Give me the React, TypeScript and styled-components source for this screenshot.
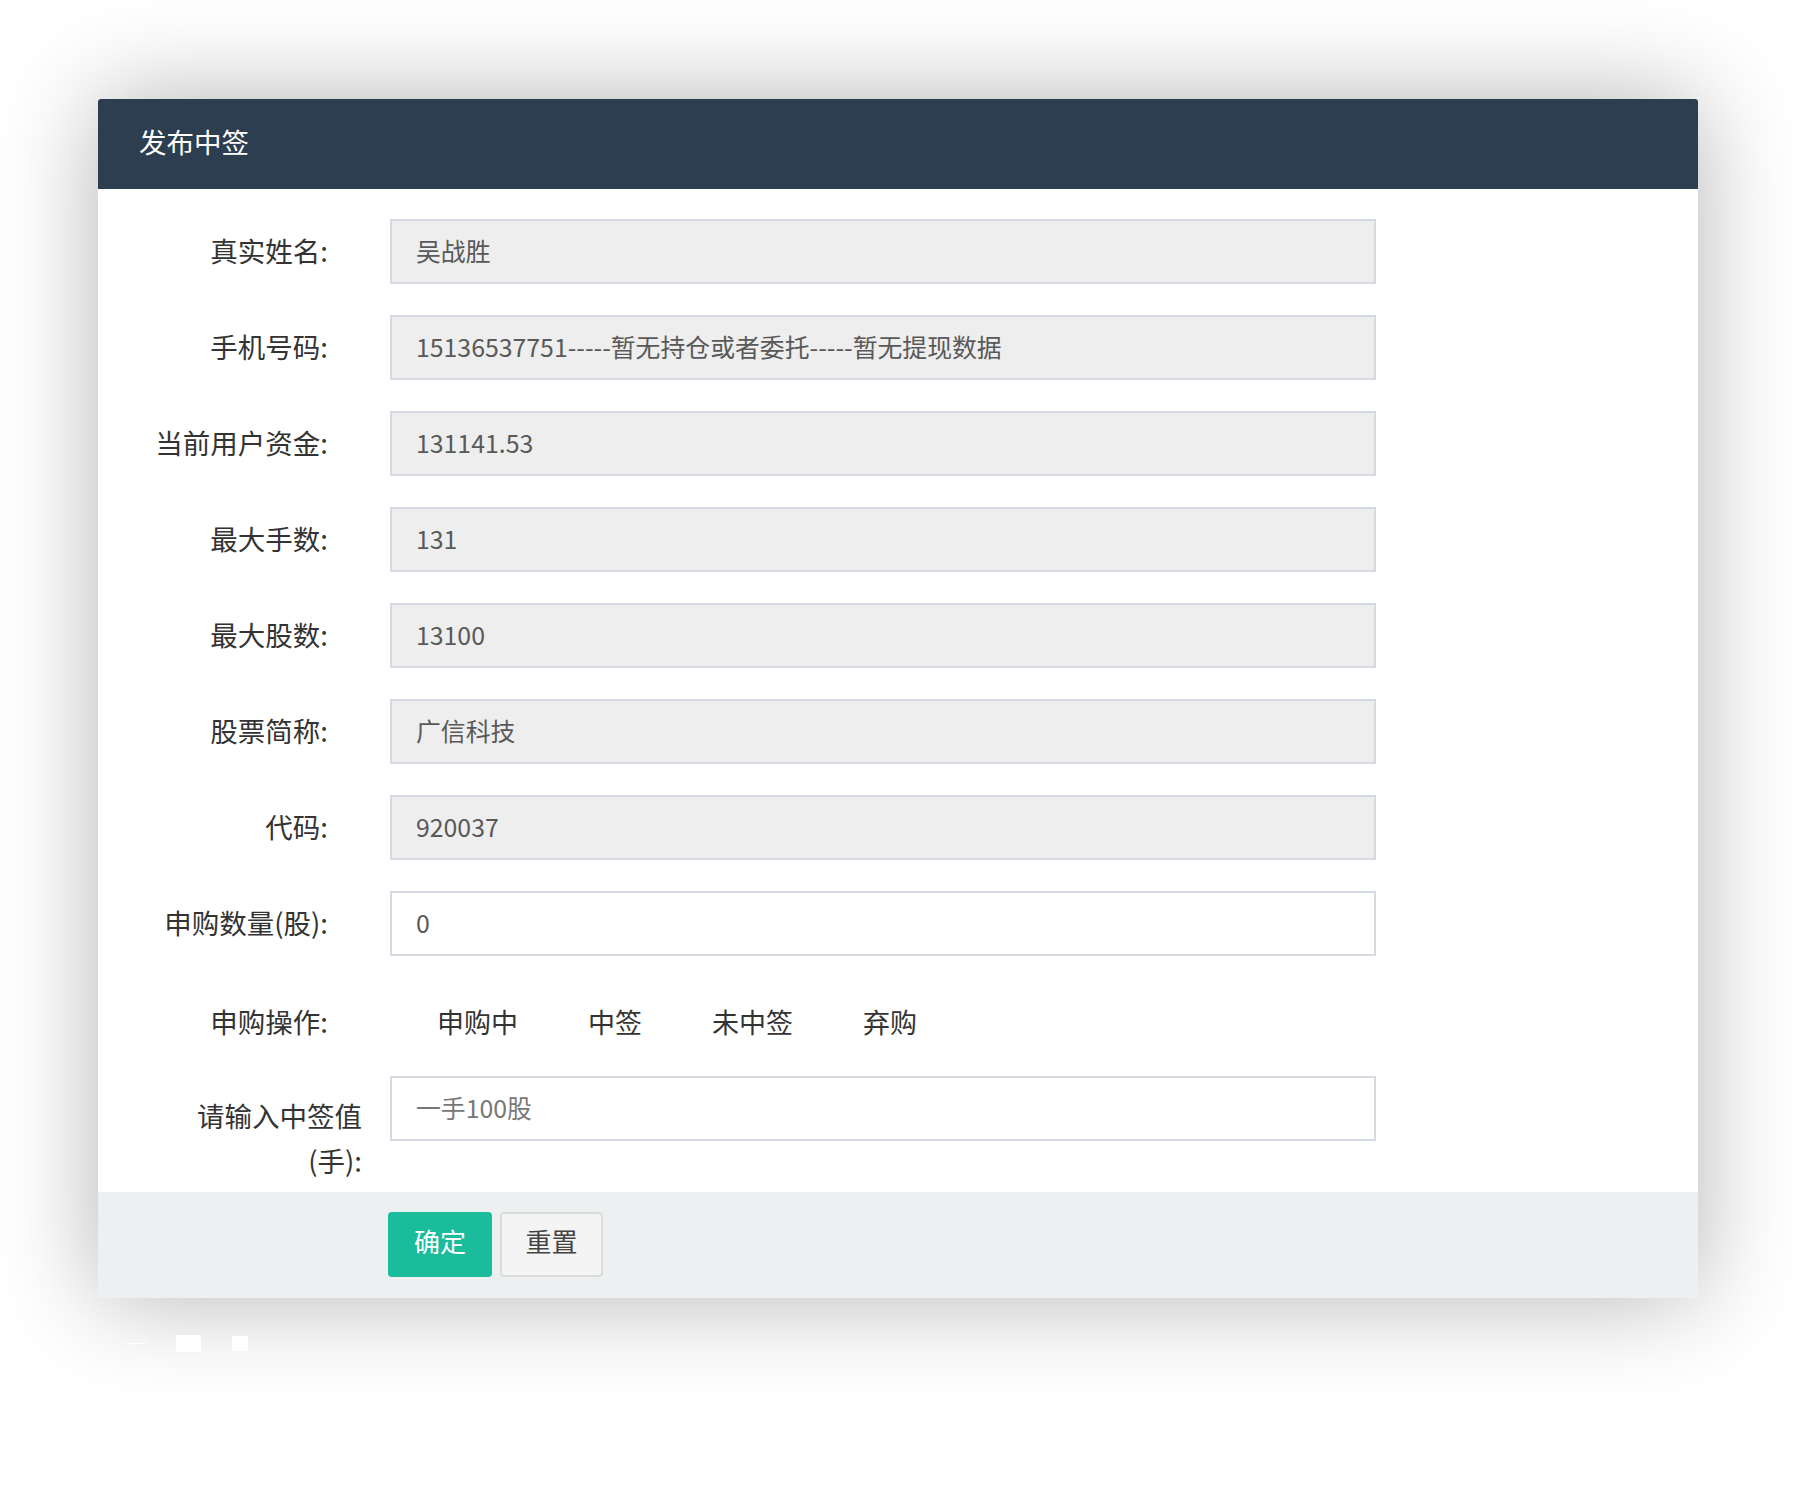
import React from 'react';
import styled, { createGlobalStyle } from 'styled-components';

const GlobalStyle = createGlobalStyle`
  html, body {
    margin: 0;
    padding: 0;
    background: #fff;
    font-family: "Noto Sans CJK SC", "Noto Sans", sans-serif;
  }
`;

const Page = styled.div`
  position: relative;
  width: 1800px;
  height: 1491px;
  box-sizing: border-box;
  padding: 99px 0 0 98px;
  overflow: hidden;
`;

const Dialog = styled.div`
  width: 1600px;
  background: #fff;
  border-radius: 3px 3px 0 0;
  box-shadow: 0 0 100px rgba(0, 0, 0, 0.3);
`;

const Header = styled.div`
  height: 90px;
  line-height: 84px;
  padding-left: 41px;
  background: #2c3e50;
  color: #fff;
  font-size: 27.5px;
  border-radius: 3px 3px 0 0;
`;

const Body = styled.form`
  padding: 30px 0 8.5px;
  margin: 0;
`;

const Row = styled.div<{ $top?: boolean }>`
  display: flex;
  align-items: ${(p) => (p.$top ? 'flex-start' : 'center')};
  margin-bottom: 31px;
  &:last-child {
    margin-bottom: 0;
  }
`;

const OptionRow = styled(Row)`
  height: 58px;
  box-sizing: border-box;
  padding-top: 12px;
`;

const Label = styled.label<{ $wrap?: boolean }>`
  flex: none;
  box-sizing: border-box;
  width: 292px;
  padding-right: ${(p) => (p.$wrap ? '28px' : '62px')};
  padding-left: ${(p) => (p.$wrap ? '96px' : '0')};
  padding-top: ${(p) => (p.$wrap ? '17px' : '0')};
  padding-bottom: ${(p) => (p.$wrap ? '0' : '3px')};
  text-align: right;
  font-size: 27.5px;
  line-height: ${(p) => (p.$wrap ? '45px' : '40px')};
  color: #333;
`;

const Field = styled.input`
  box-sizing: border-box;
  width: 986px;
  height: 65px;
  padding: 0 24px 4px;
  margin: 0;
  border: 2px solid #d5d9e1;
  border-radius: 0;
  outline: none;
  background: ${(p) => (p.readOnly ? '#eeeeee' : '#fff')};
  color: #595959;
  font-family: inherit;
  font-size: 24.85px;
  &::placeholder {
    color: #777;
  }
`;

const Options = styled.div`
  display: flex;
  gap: 70px;
  padding-left: 47px;
`;

const Option = styled.span`
  font-size: 27px;
  line-height: 40px;
  color: #333;
`;

const Footer = styled.div`
  display: flex;
  gap: 8px;
  height: 106px;
  box-sizing: border-box;
  padding: 20px 0 0 290px;
  background: #ecf0f1;
`;

const Button = styled.button<{ $primary?: boolean }>`
  width: ${(p) => (p.$primary ? '104px' : '103px')};
  height: 65px;
  border-radius: 4px;
  border: 2px solid ${(p) => (p.$primary ? '#1abc9c' : '#dcdcdc')};
  background: ${(p) => (p.$primary ? '#1abc9c' : '#f4f4f4')};
  color: ${(p) => (p.$primary ? '#fff' : '#444')};
  font-family: inherit;
  font-size: 26px;
  padding: 0 0 7px;
`;

const Mark = styled.div<{ $w: number; $h: number; $x: number; $y: number }>`
  position: absolute;
  left: ${(p) => p.$x}px;
  top: ${(p) => p.$y}px;
  width: ${(p) => p.$w}px;
  height: ${(p) => p.$h}px;
  background: #fff;
`;

const rows = [
  { label: '真实姓名:', value: '吴战胜', readOnly: true },
  { label: '手机号码:', value: '15136537751-----暂无持仓或者委托-----暂无提现数据', readOnly: true },
  { label: '当前用户资金:', value: '131141.53', readOnly: true },
  { label: '最大手数:', value: '131', readOnly: true },
  { label: '最大股数:', value: '13100', readOnly: true },
  { label: '股票简称:', value: '广信科技', readOnly: true },
  { label: '代码:', value: '920037', readOnly: true },
  { label: '申购数量(股):', value: '0', readOnly: false },
];

const ops = ['申购中', '中签', '未中签', '弃购'];

export default function App() {
  return (
    <Page>
      <GlobalStyle />
      <Dialog>
        <Header>发布中签</Header>
        <Body onSubmit={(e) => e.preventDefault()}>
          {rows.map((r) => (
            <Row key={r.label}>
              <Label>{r.label}</Label>
              <Field defaultValue={r.value} readOnly={r.readOnly} />
            </Row>
          ))}
          <OptionRow>
            <Label>申购操作:</Label>
            <Options>
              {ops.map((o) => (
                <Option key={o}>{o}</Option>
              ))}
            </Options>
          </OptionRow>
          <Row $top>
            <Label $wrap>请输入中签值(手):</Label>
            <Field placeholder="一手100股" />
          </Row>
        </Body>
        <Footer>
          <Button $primary>确定</Button>
          <Button type="button">重置</Button>
        </Footer>
      </Dialog>
      <Mark $x={126} $y={1343} $w={20} $h={1} />
      <Mark $x={176} $y={1335} $w={25} $h={17} />
      <Mark $x={232} $y={1336} $w={16} $h={15} />
    </Page>
  );
}
